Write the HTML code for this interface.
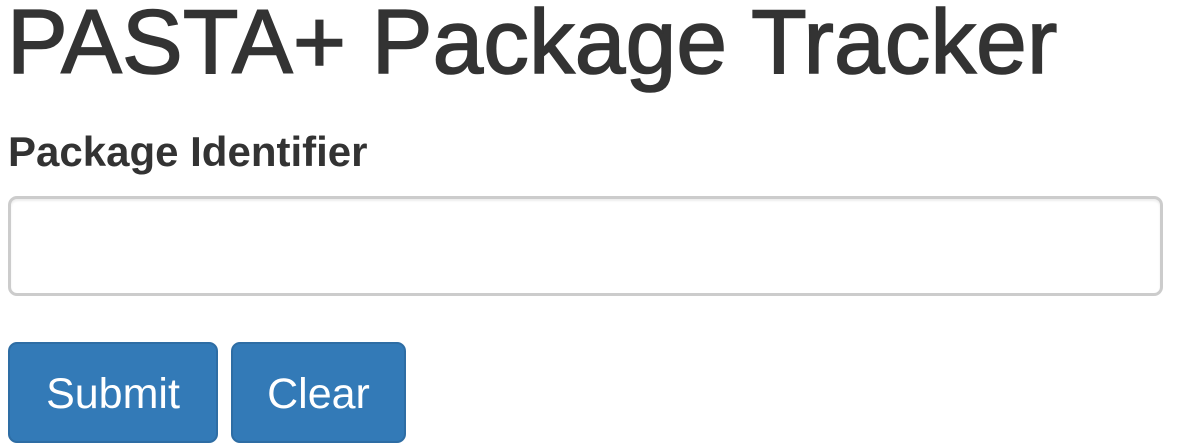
<!DOCTYPE html>
<html><head><meta charset="utf-8"><style>
body{margin:0;background:#fff;font-family:"Liberation Sans",Arial,sans-serif;color:#333;width:1177px;height:447px;overflow:hidden;position:relative}
h1{position:absolute;left:7px;top:-9px;margin:0;font-weight:normal;font-size:91px;white-space:nowrap;letter-spacing:0.2px;-webkit-text-stroke:1.6px #333}
.lbl{position:absolute;left:8px;top:128px;font-weight:bold;font-size:42px;white-space:nowrap}
.inp{position:absolute;left:8px;top:196px;width:1149px;height:94px;border:3px solid #ccc;border-radius:9px;box-shadow:inset 0 2px 2px rgba(0,0,0,.075)}
.btn{position:absolute;top:342px;height:97px;background:#337ab7;border:2px solid #2e6da4;border-radius:9px;color:#fff;font-size:43px;text-align:center;line-height:101px}
</style></head><body>
<h1>PASTA+ Package Tracker</h1>
<div class="lbl">Package Identifier</div>
<div class="inp"></div>
<div class="btn" style="left:8px;width:206px">Submit</div>
<div class="btn" style="left:231px;width:171px">Clear</div>
</body></html>
